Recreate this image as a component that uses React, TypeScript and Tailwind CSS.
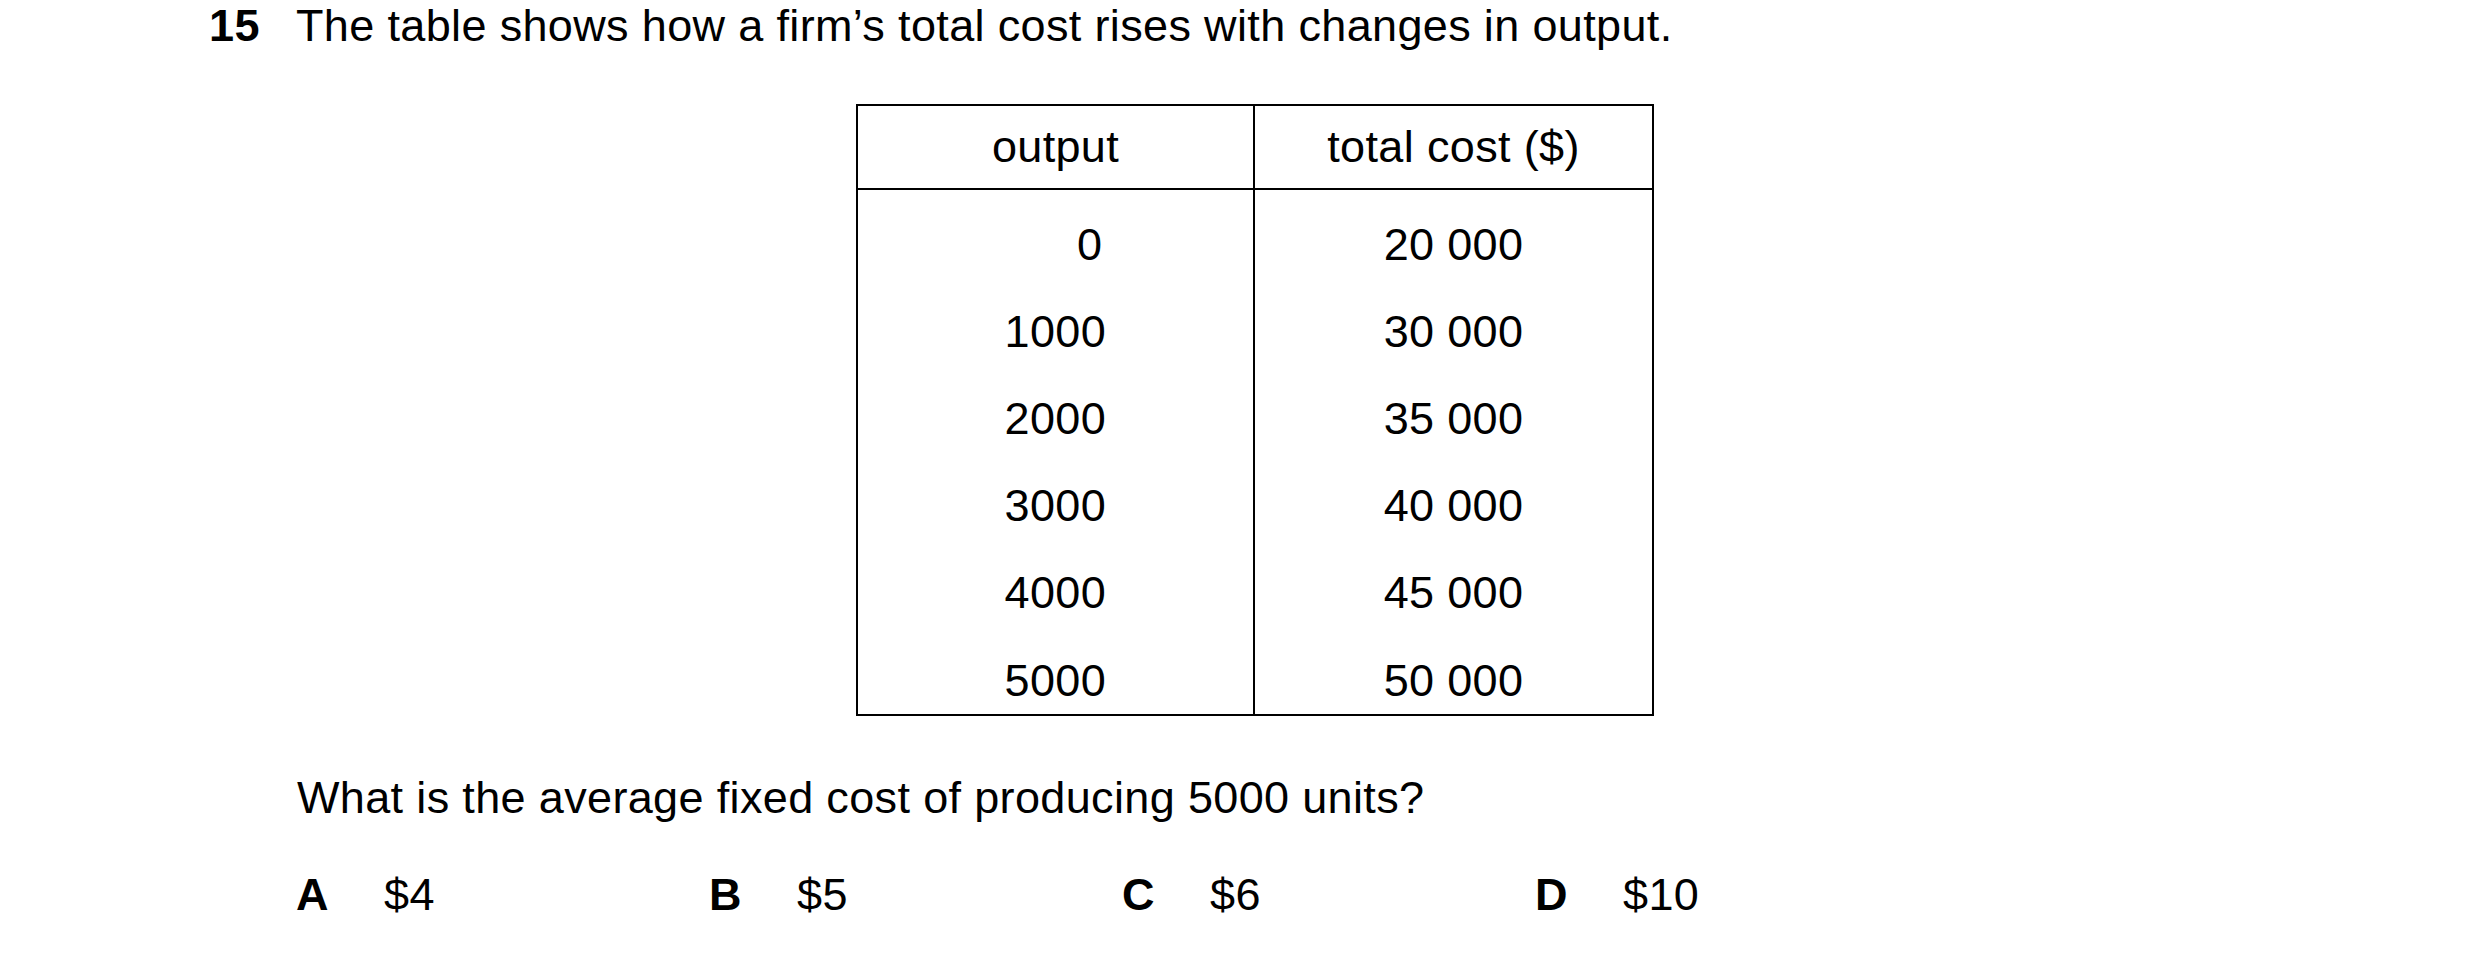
import React from 'react';

const rows = [
  { output: '0', cost: '20 000' },
  { output: '1000', cost: '30 000' },
  { output: '2000', cost: '35 000' },
  { output: '3000', cost: '40 000' },
  { output: '4000', cost: '45 000' },
  { output: '5000', cost: '50 000' },
];

const options = [
  { key: 'A', value: '$4' },
  { key: 'B', value: '$5' },
  { key: 'C', value: '$6' },
  { key: 'D', value: '$10' },
];

export default function App() {
  return (
    <div className="w-[2480px] h-[955px] bg-white text-black font-['Liberation_Sans',Arial,sans-serif] text-[45px] tracking-[0.35px] leading-[50px] overflow-hidden">
      {/* Question stem */}
      <div className="flex pl-[209px] pt-[1px]">
        <span className="w-[87px] font-bold">15</span>
        <span>The table shows how a firm’s total cost rises with changes in output.</span>
      </div>

      {/* Data table */}
      <div className="ml-[856px] mt-[53px] w-[798px] grid grid-cols-2 border-2 border-black">
        <div className="h-[84px] flex items-center justify-center border-r-2 border-b-2 border-black">output</div>
        <div className="h-[84px] flex items-center justify-center border-b-2 border-black">total cost ($)</div>
        <div className="flex flex-col items-center gap-[37.2px] pt-[29.7px] pb-[8.3px] border-r-2 border-black">
          {rows.map((r) => (
            <div key={r.output} className="w-[102px] pr-[4px] text-right">{r.output}</div>
          ))}
        </div>
        <div className="flex flex-col items-center gap-[37.2px] pt-[29.7px] pb-[8.3px]">
          {rows.map((r) => (
            <div key={r.cost}>{r.cost}</div>
          ))}
        </div>
      </div>

      <div className="pl-[297px] mt-[57px]">What is the average fixed cost of producing 5000 units?</div>

      {/* Answer options */}
      <div className="flex pl-[296px] mt-[47px]">
        {options.map((o) => (
          <div key={o.key} className="w-[413px] flex">
            <span className="w-[88px] font-bold">{o.key}</span>
            <span>{o.value}</span>
          </div>
        ))}
      </div>
    </div>
  );
}
